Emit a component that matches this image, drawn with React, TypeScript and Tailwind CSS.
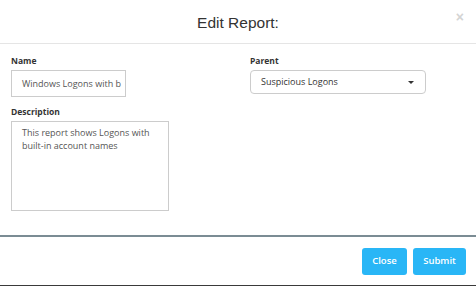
export default function App() {
  return (
    <div className="w-[476px] h-[286px] bg-white flex flex-col border-b border-[#3a3a3a] font-['Open_Sans',sans-serif] text-[#333]">
      {/* Header */}
      <div className="relative h-[44px] shrink-0 border-b border-[#e5e5e5] flex items-center justify-center">
        <h2 className="font-['Liberation_Sans',Arial,sans-serif] text-[15.5px] text-[#333] pt-[2px]">Edit Report:</h2>
        <span className="absolute right-[12px] top-[10px] text-[14px] leading-none font-bold text-[#d4d4d4] font-['Liberation_Sans',Arial,sans-serif]">
          ×
        </span>
      </div>

      {/* Body */}
      <div className="flex-1 flex px-[11px] pt-[11px]">
        <div className="w-[239px] flex flex-col">
          <label className="text-[8.5px] font-bold leading-[12px] text-[#333]">Name</label>
          <div className="mt-[3px] w-[115px] h-[27px] border border-[#ccc] flex items-center pl-[10px] text-[9px] text-[#555] overflow-hidden whitespace-nowrap">
            Windows Logons with b
          </div>
          <label className="mt-[9px] text-[8.5px] font-bold leading-[12px] text-[#333]">Description</label>
          <div className="mt-[3px] w-[158px] h-[90px] border border-[#ccc] px-[10px] pt-[4px] text-[9px] leading-[13px] text-[#555]">
            This report shows Logons with
            <br />
            built-in account names
          </div>
        </div>
        <div className="flex flex-col">
          <label className="text-[8.5px] font-bold leading-[12px] text-[#333]">Parent</label>
          <div className="mt-[3px] w-[176px] h-[24px] border border-[#ccc] rounded-[4px] flex items-center justify-between pl-[10px] pr-[11px] text-[9px] text-[#333]">
            <span>Suspicious Logons</span>
            <svg width="6" height="3" viewBox="0 0 6 3">
              <path d="M0 0h6L3 3z" fill="#333" />
            </svg>
          </div>
        </div>
      </div>

      {/* Footer */}
      <div className="h-[50px] shrink-0 border-t-2 border-[#7b8c94] flex items-start justify-end gap-[6px] pt-[11px] pr-[10px]">
        <button className="w-[45px] h-[27px] rounded-[3px] bg-[#29b6f6] text-white text-[9.5px] font-semibold">Close</button>
        <button className="w-[53px] h-[27px] rounded-[3px] bg-[#29b6f6] text-white text-[9.5px] font-semibold">Submit</button>
      </div>
    </div>
  );
}
